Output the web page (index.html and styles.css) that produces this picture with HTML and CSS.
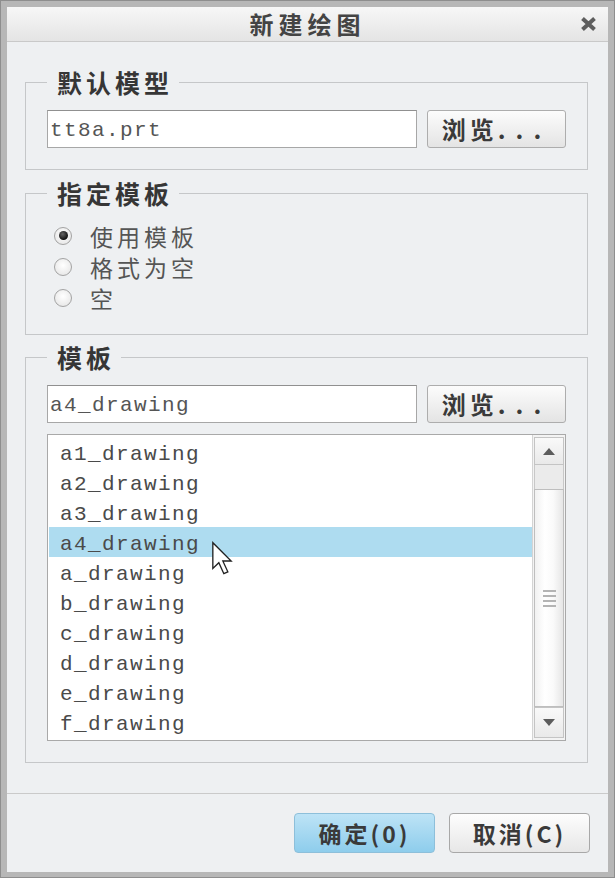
FILE: index.html
```html
<!DOCTYPE html>
<html lang="zh-CN">
<head>
    <meta charset="UTF-8">
    <title>新建绘图</title>
    <link rel="stylesheet" href="styles.css">
</head>
<body>

    <div class="window">
        <div class="dialog">
            <!-- Title bar -->
            <div class="titlebar">
                <span class="title">新建绘图</span>
                <span class="close">
                    <svg width="19" height="16" viewBox="0 0 19 16">
                        <path d="M3.5 2.5 L15.5 13.5 M15.5 2.5 L3.5 13.5" stroke="#5e5e5e" stroke-width="4" fill="none"/>
                    </svg>
                </span>
            </div>

            <div class="content">
                <!-- Default model -->
                <fieldset class="group group-model">
                    <legend>默认模型</legend>
                    <div class="file-row">
                        <div class="field">tt8a.prt</div>
                        <button class="browse">浏览<span class="dots">...</span></button>
                    </div>
                </fieldset>

                <!-- Template type -->
                <fieldset class="group group-type">
                    <legend>指定模板</legend>
                    <div class="radios">
                        <div class="radio checked"><span class="dot"></span>使用模板</div>
                        <div class="radio"><span class="dot"></span>格式为空</div>
                        <div class="radio"><span class="dot"></span>空</div>
                    </div>
                </fieldset>

                <!-- Template list -->
                <fieldset class="group group-template">
                    <legend>模板</legend>
                    <div class="file-row">
                        <div class="field">a4_drawing</div>
                        <button class="browse">浏览<span class="dots">...</span></button>
                    </div>
                    <div class="listbox">
                        <ul class="items">
                            <li>a1_drawing</li>
                            <li>a2_drawing</li>
                            <li>a3_drawing</li>
                            <li class="selected">a4_drawing</li>
                            <li>a_drawing</li>
                            <li>b_drawing</li>
                            <li>c_drawing</li>
                            <li>d_drawing</li>
                            <li>e_drawing</li>
                            <li>f_drawing</li>
                        </ul>
                        <div class="scrollbar">
                            <div class="scroll-btn"><span class="arrow-up"></span></div>
                            <div class="track"></div>
                            <div class="thumb">
                                <span class="grip"></span>
                            </div>
                            <div class="scroll-btn scroll-btn-down"><span class="arrow-down"></span></div>
                        </div>
                        <!-- mouse pointer over the list -->
                        <svg class="cursor" width="22" height="35" viewBox="0 0 13 21">
                            <path d="M1 1 L1 16.5 L4.6 13 L7.6 19.6 L10 18.5 L7 12 L12 12 Z" fill="#fff" stroke="#222" stroke-width="0.8" stroke-linejoin="miter"/>
                        </svg>
                    </div>
                </fieldset>
            </div>

            <!-- Buttons -->
            <div class="footer">
                <button class="btn btn-primary">确定(0)</button>
                <button class="btn">取消(C)</button>
            </div>
        </div>
    </div>

</body>
</html>
```

FILE: styles.css
```css
* {
    box-sizing: border-box;
}
body {
    margin: 0;
    padding: 0;
    background-color: #b5b5b5;
    font-family: "Noto Sans CJK SC", sans-serif;
}
.window {
    width: 615px;
    height: 878px;
    border: 1px solid #8e8e8e;
    background-color: #b7b7b7;
    padding: 6px 6px 5px 6px;
}
.dialog {
    height: 100%;
    display: flex;
    flex-direction: column;
    background-color: #eef0f2;
}
.titlebar {
    height: 35px;
    display: grid;
    grid-template-columns: 1fr auto 1fr;
    align-items: center;
    background: linear-gradient(#f7f7f7, #e4e4e4);
    border-bottom: 1px solid #c9c9c9;
}
.title {
    grid-column: 2;
    font-size: 24px;
    font-weight: bold;
    letter-spacing: 5px;
    color: #444;
    line-height: 34px;
}
.close {
    grid-column: 3;
    justify-self: end;
    margin-right: 10px;
    display: flex;
}
.content {
    flex: 1;
    padding: 0 20px 0 18px;
}
.group {
    margin: 0;
    border: 1px solid #c5c7c9;
    padding: 13px 21px 21px 21px;
    min-width: 0;
}
.group legend {
    padding: 0 6px 0 10px;
    font-size: 25px;
    line-height: 30px;
    font-weight: bold;
    letter-spacing: 4px;
    color: #363636;
}
.group-model {
    margin-top: 25px;
}
.group-type {
    margin-top: 8px;
    padding-top: 12px;
}
.group-template {
    margin-top: 7px;
}
.file-row {
    display: flex;
    gap: 10px;
}
.field {
    flex: 1;
    height: 38px;
    border: 1px solid #a7a7a7;
    border-top-color: #909090;
    background-color: #fff;
    padding: 3px 0 0 2px;
    font-family: "Liberation Mono", monospace;
    font-size: 21px;
    letter-spacing: 1.4px;
    line-height: 33px;
    color: #555;
}
.browse,
.btn {
    font-family: "Noto Sans CJK SC", sans-serif;
    font-weight: bold;
    color: #3a3a3a;
    padding: 0;
    cursor: pointer;
}
.browse {
    width: 139px;
    height: 38px;
    border: 1px solid #adadad;
    border-radius: 3px;
    background: linear-gradient(#fcfcfc, #e4e4e4);
    font-size: 24px;
    letter-spacing: 4px;
    line-height: 36px;
}
.browse .dots {
    letter-spacing: 10px;
}
.radios {
    display: flex;
    flex-direction: column;
}
.radio {
    height: 31px;
    display: flex;
    align-items: center;
    font-size: 23px;
    letter-spacing: 4px;
    color: #555;
}
.dot {
    width: 18px;
    height: 18px;
    margin: 0 18px 0 7px;
    border-radius: 50%;
    border: 1px solid #a3a3a3;
    background: radial-gradient(circle at 50% 40%, #fff, #e2e2e2);
    display: flex;
    align-items: center;
    justify-content: center;
}
.radio.checked .dot::after {
    content: "";
    width: 9px;
    height: 9px;
    border-radius: 50%;
    background: radial-gradient(circle at 40% 35%, #666, #111 70%);
}
.listbox {
    position: relative;
    margin-top: 11px;
    height: 307px;
    display: flex;
    border: 1px solid #a9a9a9;
    background-color: #fff;
}
.items {
    flex: 1;
    list-style: none;
    margin: 0;
    padding: 2px 0 0 1px;
}
.items li {
    height: 30px;
    padding: 6px 0 0 11px;
    line-height: 24px;
    font-family: "Liberation Mono", monospace;
    font-size: 21px;
    letter-spacing: 1.4px;
    color: #4a4a4a;
}
.items li.selected {
    background-color: #aedcf0;
}
.scrollbar {
    width: 33px;
    display: flex;
    flex-direction: column;
    padding: 2px 1px 2px 1px;
    background-color: #f3f3f3;
    border-left: 1px solid #d4d4d4;
}
.scroll-btn {
    height: 28px;
    border: 1px solid #c4c4c4;
    background: linear-gradient(#f9f9f9, #e9e9e9);
    display: flex;
    align-items: center;
    justify-content: center;
}
.scroll-btn-down {
    height: 31px;
}
.arrow-up {
    border-left: 6px solid transparent;
    border-right: 6px solid transparent;
    border-bottom: 7px solid #5c5c5c;
}
.arrow-down {
    border-left: 6px solid transparent;
    border-right: 6px solid transparent;
    border-top: 7px solid #5c5c5c;
}
.track {
    height: 24px;
    border-left: 1px solid #c8c8c8;
    border-right: 1px solid #c8c8c8;
    background-color: #ebebeb;
}
.thumb {
    flex: 1;
    border: 1px solid #bebebe;
    background: linear-gradient(to right, #f1f1f1, #ffffff 35%, #fafafa 65%, #e6e6e6);
    display: flex;
    align-items: center;
    justify-content: center;
}
.grip {
    width: 13px;
    height: 17px;
    background: repeating-linear-gradient(#b4b4b4 0 2px, transparent 2px 5px);
}
.cursor {
    position: absolute;
    left: 163px;
    top: 106px;
}
.footer {
    height: 79px;
    display: flex;
    justify-content: flex-end;
    align-items: center;
    gap: 14px;
    padding-right: 18px;
    border-top: 1px solid #cacaca;
}
.btn {
    width: 141px;
    height: 40px;
    border: 1px solid #a8a8a8;
    border-radius: 4px;
    background: linear-gradient(#fdfdfd, #e7e7e7);
    font-size: 23px;
    letter-spacing: 3px;
}
.btn-primary {
    border-color: #8dbfda;
    background: linear-gradient(#bde3f6, #8ecdec);
}
```
